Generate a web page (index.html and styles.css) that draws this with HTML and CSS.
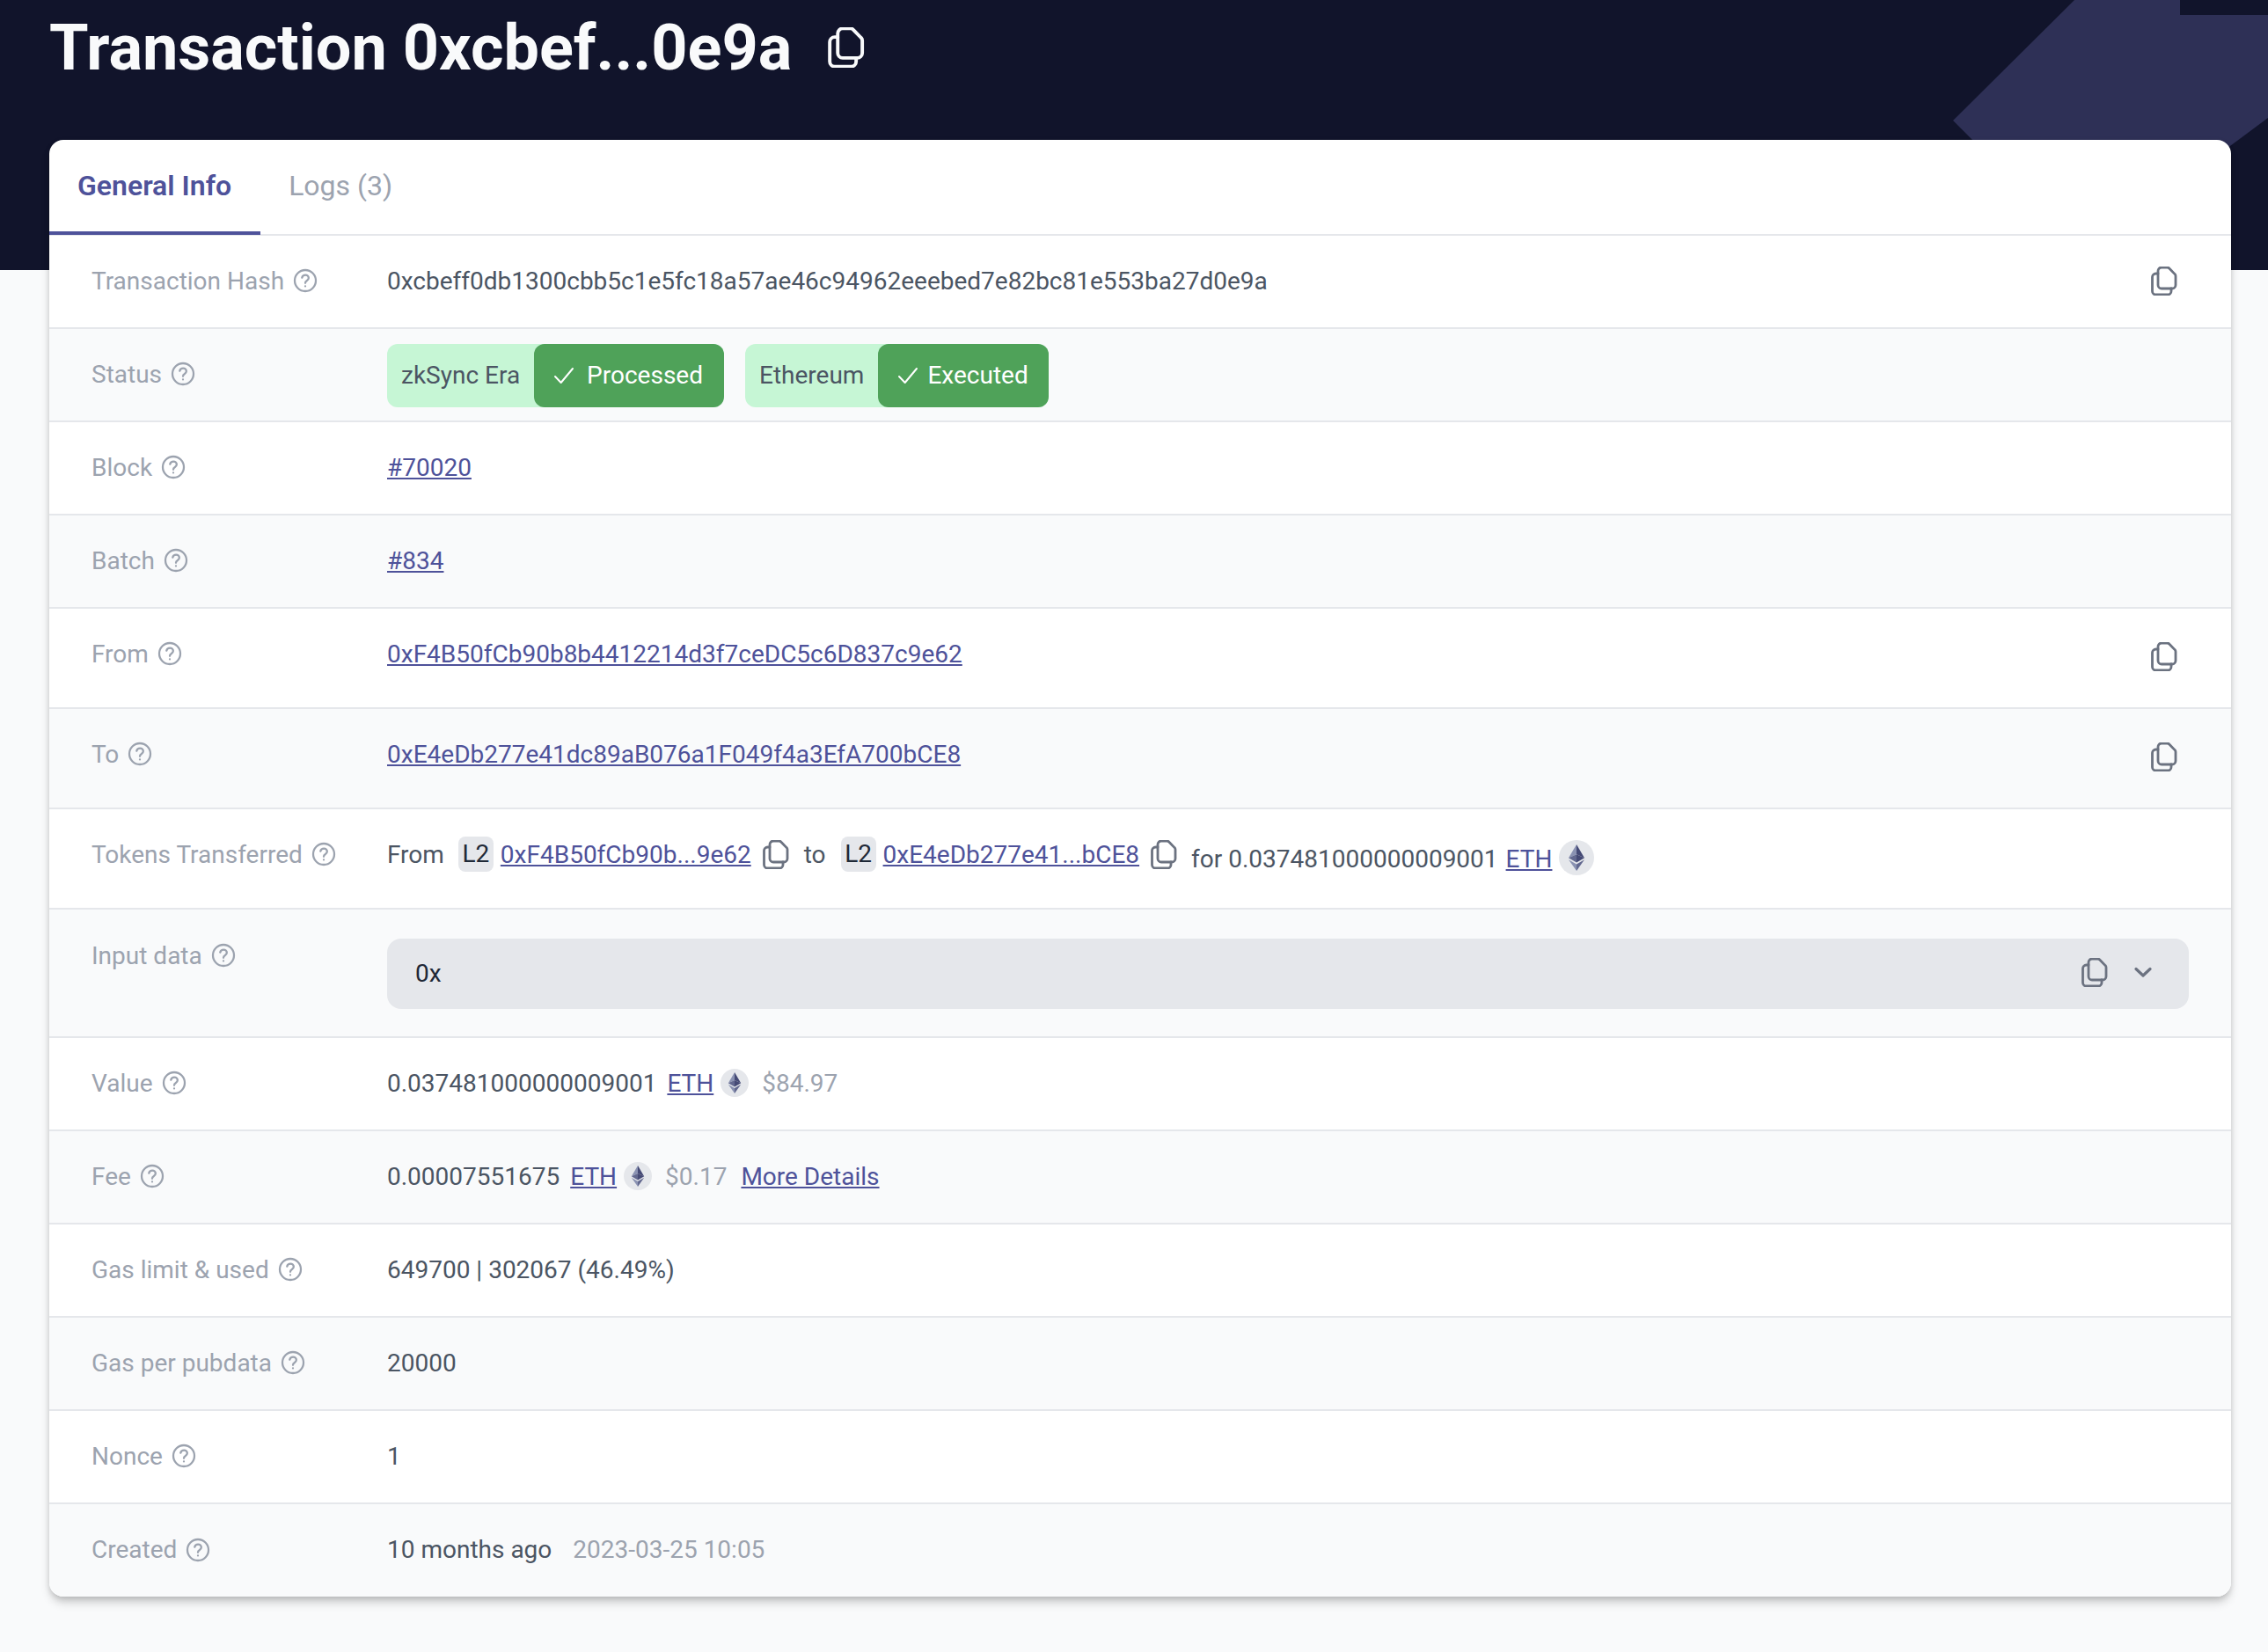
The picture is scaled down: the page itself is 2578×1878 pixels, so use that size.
FILE: index.html
```html
<!DOCTYPE html>
<html>

<head>
    <title>Transaction 0xcbef...0e9a</title>
    <link rel="stylesheet" href="styles.css">
</head>

<body>

    <svg class="defs" width="0" height="0">
        <symbol id="copy" viewBox="0 0 30 33">
            <path fill="none" stroke="currentColor" stroke-width="2.8" stroke-linejoin="round" d="M8 5a4 4 0 0 1 4-4h6.5a3 3 0 0 1 2.2 1l6.4 6.6a3 3 0 0 1 .9 2.1V21a4 4 0 0 1-4 4H12a4 4 0 0 1-4-4z" />
            <path fill="none" stroke="currentColor" stroke-width="2.8" stroke-linecap="round" d="M8 8H5.500a4 4 0 0 0-4 4v16a4 4 0 0 0 4 4H19a4 4 0 0 0 4-4v-3" />
        </symbol>
        <symbol id="help" viewBox="0 0 24 24">
            <path fill="none" stroke="currentColor" stroke-width="1.7" stroke-linecap="round" stroke-linejoin="round" d="M9.200 9.500c.4-1.400 1.500-2.200 2.900-2.200 1.600 0 2.800 1.100 2.800 2.500 0 1.200-.8 1.800-1.700 2.400-.8.500-1.200 1-1.200 1.900m0 2.700h.01M21 12a9 9 0 1 1-18 0 9 9 0 0 1 18 0z" />
        </symbol>
        <symbol id="check" viewBox="0 0 24 24">
            <path fill="none" stroke="currentColor" stroke-width="1.500" stroke-linecap="round" stroke-linejoin="round" d="M4.500 12.750l5 5.250 10-12" />
        </symbol>
        <symbol id="eth" viewBox="0 0 40 40">
            <circle cx="20" cy="20" r="20" fill="#e5e7eb" />
            <polygon fill="#8a92b2" points="20,5 11,20.300 20,16.200" />
            <polygon fill="#454a75" points="20,5 29,20.300 20,16.200" />
            <polygon fill="#62688f" points="11,20.300 20,16.200 20,25.600" />
            <polygon fill="#454a75" points="29,20.300 20,16.200 20,25.600" />
            <polygon fill="#8a92b2" points="11,22.300 20,35 20,27.600" />
            <polygon fill="#62688f" points="29,22.300 20,35 20,27.600" />
        </symbol>
    </svg>

    <div class="hero">
        <svg class="hero-shape" viewBox="0 0 358 307" width="358" height="307">
            <polygon fill="#2e3056" points="138,0 358,0 358,134 300,177 40,177 0,137" />
            <rect fill="#11142b" x="258" y="0" width="100" height="17" />
        </svg>
        <h1 class="title">
            <span>Transaction 0xcbef...0e9a</span>
            <svg class="title-copy"><use href="#copy" /></svg>
        </h1>
    </div>

    <div class="card">
        <div class="tabs">
            <div class="tab active">General Info</div>
            <div class="tab">Logs (3)</div>
        </div>

        <div class="row">
            <div class="label">Transaction Hash <svg class="help"><use href="#help" /></svg></div>
            <div class="value spread">
                <span>0xcbeff0db1300cbb5c1e5fc18a57ae46c94962eeebed7e82bc81e553ba27d0e9a</span>
                <svg class="copy copy-end"><use href="#copy" /></svg>
            </div>
        </div>

        <div class="row">
            <div class="label">Status <svg class="help"><use href="#help" /></svg></div>
            <div class="value badges">
                <div class="badge">
                    <span class="badge-name">zkSync Era</span>
                    <span class="badge-state"><svg class="check"><use href="#check" /></svg>Processed</span>
                </div>
                <div class="badge">
                    <span class="badge-name">Ethereum</span>
                    <span class="badge-state tight"><svg class="check"><use href="#check" /></svg>Executed</span>
                </div>
            </div>
        </div>

        <div class="row">
            <div class="label">Block <svg class="help"><use href="#help" /></svg></div>
            <div class="value"><a href="#">#70020</a></div>
        </div>

        <div class="row">
            <div class="label">Batch <svg class="help"><use href="#help" /></svg></div>
            <div class="value"><a href="#">#834</a></div>
        </div>

        <div class="row tall">
            <div class="label">From <svg class="help"><use href="#help" /></svg></div>
            <div class="value spread">
                <a href="#">0xF4B50fCb90b8b4412214d3f7ceDC5c6D837c9e62</a>
                <svg class="copy copy-end copy-low"><use href="#copy" /></svg>
            </div>
        </div>

        <div class="row tall">
            <div class="label">To <svg class="help"><use href="#help" /></svg></div>
            <div class="value spread">
                <a href="#">0xE4eDb277e41dc89aB076a1F049f4a3EfA700bCE8</a>
                <svg class="copy copy-end copy-low"><use href="#copy" /></svg>
            </div>
        </div>

        <div class="row tall">
            <div class="label">Tokens Transferred <svg class="help"><use href="#help" /></svg></div>
            <div class="value transfer">
                <span class="gap-from">From</span>
                <span class="network">L2</span>
                <a href="#">0xF4B50fCb90b...9e62</a>
                <svg class="copy"><use href="#copy" /></svg>
                <span class="gap-to">to</span>
                <span class="network">L2</span>
                <a href="#">0xE4eDb277e41...bCE8</a>
                <svg class="copy"><use href="#copy" /></svg>
                <span class="amount">for 0.037481000000009001</span>
                <a href="#" class="eth-link">ETH</a>
                <svg class="eth-large"><use href="#eth" /></svg>
            </div>
        </div>

        <div class="row input-row">
            <div class="label">Input data <svg class="help"><use href="#help" /></svg></div>
            <div class="value">
                <div class="input-box">
                    <span>0x</span>
                    <div class="input-actions">
                        <svg class="copy"><use href="#copy" /></svg>
                        <svg class="chevron" viewBox="0 0 20 13"><path fill="none" stroke="currentColor" stroke-width="3.200" stroke-linecap="round" stroke-linejoin="round" d="M2 2.500l8 7.500 8-7.500" /></svg>
                    </div>
                </div>
            </div>
        </div>

        <div class="row">
            <div class="label">Value <svg class="help"><use href="#help" /></svg></div>
            <div class="value price">
                <span>0.037481000000009001</span>
                <a href="#">ETH</a>
                <svg class="eth"><use href="#eth" /></svg>
                <span class="muted fiat">$84.97</span>
            </div>
        </div>

        <div class="row">
            <div class="label">Fee <svg class="help"><use href="#help" /></svg></div>
            <div class="value price">
                <span>0.00007551675</span>
                <a href="#">ETH</a>
                <svg class="eth"><use href="#eth" /></svg>
                <span class="muted fiat">$0.17</span>
                <a href="#" class="details">More Details</a>
            </div>
        </div>

        <div class="row">
            <div class="label">Gas limit &amp; used <svg class="help"><use href="#help" /></svg></div>
            <div class="value">649700 | 302067 (46.49%)</div>
        </div>

        <div class="row">
            <div class="label">Gas per pubdata <svg class="help"><use href="#help" /></svg></div>
            <div class="value">20000</div>
        </div>

        <div class="row">
            <div class="label">Nonce <svg class="help"><use href="#help" /></svg></div>
            <div class="value">1</div>
        </div>

        <div class="row last">
            <div class="label">Created <svg class="help"><use href="#help" /></svg></div>
            <div class="value created">
                <span>10 months ago</span>
                <span class="muted">2023-03-25 10:05</span>
            </div>
        </div>
    </div>

</body>

</html>
```

FILE: styles.css
```css
body {
    margin: 0;
    height: 1878px;
    overflow: hidden;
    font-family: Roboto, "Liberation Sans", sans-serif;
    font-size: 28px;
    color: #4b5563;
    background-color: #f9fafb;
}

a {
    color: #4e529a;
    text-decoration: underline;
}

.defs {
    position: absolute;
}

.hero {
    position: relative;
    height: 307px;
    padding-left: 56px;
    background-color: #11142b;
    overflow: hidden;
}

.hero-shape {
    position: absolute;
    top: 0;
    right: 0;
}

.title {
    position: relative;
    display: flex;
    align-items: center;
    margin: 0;
    height: 108px;
    font-size: 72px;
    font-weight: 700;
    color: #f9fafb;
}

.title-copy {
    width: 42px;
    height: 46px;
    margin-left: 41px;
}

.card {
    position: relative;
    margin: -148px 42px 0 56px;
    background-color: white;
    border-radius: 16px;
    box-shadow: 0 8px 12px -2px rgba(0, 0, 0, 0.2), 0 2px 6px 0 rgba(0, 0, 0, 0.12);
    overflow: hidden;
}

.tabs {
    display: flex;
    height: 107px;
    border-bottom: 2px solid #e5e7eb;
    font-size: 32px;
    color: #9ca3af;
}

.tab {
    display: flex;
    align-items: center;
    padding: 0 32px 1px;
    margin-bottom: -1px;
    border-bottom: 4px solid transparent;
}

.tab.active {
    padding-right: 33px;
    font-weight: 600;
    color: #4e529a;
    border-bottom-color: #4e529a;
}

.row {
    display: grid;
    grid-template-columns: 336px 1fr;
    align-items: center;
    height: 102px;
    padding: 0 48px 2px;
    border-bottom: 2px solid #e5e7eb;
}

.row:nth-child(odd) {
    background-color: #f9fafb;
}

.row.tall {
    padding-bottom: 10px;
}

.row.last {
    height: 103px;
    border-bottom: none;
}

.row.input-row {
    align-items: start;
    height: 111px;
    padding: 33px 48px 0;
}

.input-row .label {
    height: 38px;
}

.label {
    display: flex;
    align-items: center;
    gap: 8px;
    color: #9ca3af;
}

.help {
    width: 32px;
    height: 32px;
}

.value {
    display: flex;
    align-items: center;
}

.spread {
    justify-content: space-between;
}

.copy {
    width: 30px;
    height: 33px;
    color: #6b7280;
    flex-shrink: 0;
}

.copy-end {
    margin-right: 13px;
}

.copy-low {
    margin-top: 6px;
}

.badges {
    gap: 24px;
    padding-top: 4px;
}

.badge {
    display: flex;
    height: 72px;
    line-height: 72px;
    border-radius: 12px;
    background-color: #c6f6d5;
}

.badge-name {
    padding: 0 32px 0 16px;
}

.badge-state {
    display: flex;
    align-items: center;
    gap: 10px;
    margin-left: -16px;
    padding: 0 24px 0 18px;
    border-radius: 12px;
    color: white;
    background-color: #4fa259;
}

.badge-state.tight {
    gap: 6px;
    padding-right: 23px;
}

.check {
    width: 32px;
    height: 32px;
}

.transfer .network {
    width: 40px;
    height: 40px;
    margin-right: 8px;
    line-height: 40px;
    text-align: center;
    border-radius: 8px;
    color: #1f2937;
    background-color: #e5e7eb;
}

.gap-from {
    margin-right: 16px;
}

.gap-to {
    margin: 0 17px;
}

.transfer .copy {
    margin-left: 13px;
}

.amount {
    margin: 10px 9px 0 16px;
}

.eth-link {
    margin-top: 10px;
}

.eth-large {
    width: 40px;
    height: 40px;
    margin: 8px 0 0 8px;
}

.input-box {
    flex: 1;
    display: flex;
    justify-content: space-between;
    align-items: center;
    height: 78px;
    padding: 0 32px 2px;
    border-radius: 16px;
    color: #1f2937;
    background-color: #e5e7eb;
}

.input-actions {
    display: flex;
    align-items: center;
    gap: 30px;
    margin: 0 10px 2px 0;
    color: #6b7280;
}

.chevron {
    width: 20px;
    height: 13px;
}

.price {
    gap: 12px;
}

.eth {
    width: 32px;
    height: 32px;
    margin-left: -4px;
}

.fiat {
    margin-left: 3px;
}

.details {
    margin-left: 4px;
}

.muted {
    color: #9ca3af;
}

.created {
    gap: 24px;
}
```
